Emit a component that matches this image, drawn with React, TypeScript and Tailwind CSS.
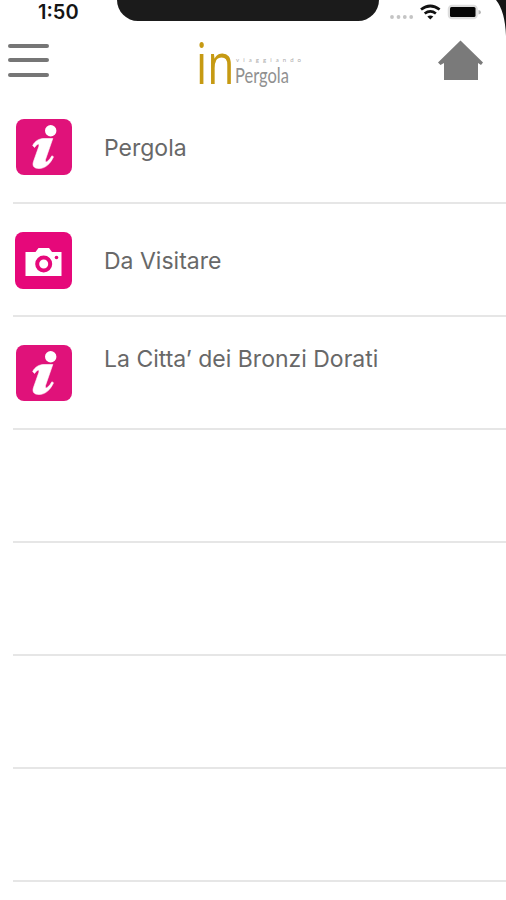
type Kind = "info" | "camera";

const rows: { label: string; icon: Kind; raised?: boolean }[] = [
  { label: "Pergola", icon: "info" },
  { label: "Da Visitare", icon: "camera" },
  { label: "La Citta’ dei Bronzi Dorati", icon: "info", raised: true },
];

function InfoIcon() {
  return (
    <svg viewBox="0 0 56 56" className="h-14 w-14 shrink-0">
      <rect width="56" height="56" rx="8" fill="#e0127a" />
      <circle cx="34.7" cy="11.7" r="5.700" fill="#fff" />
      <path
        d="M16.700 26.500C19 21.800 23.500 19.500 28 19.500H36.800L29.500 40.500C29 43 30 43.500 31.500 42.300C33.300 40.800 34.800 39 35.900 36.800L37.500 37.800C34.500 44.500 29.500 49.500 23 49.500C17.500 49.500 16.200 46.500 17.500 42.500L22.800 27.500C23.500 25 22.500 24.500 21 25.700C20 26.500 19.300 27.300 18.500 28.500Z"
        fill="#fff"
        stroke="#fff"
        strokeWidth=".6"
        strokeLinejoin="round"
      />
    </svg>
  );
}

function CameraIcon() {
  return (
    <svg viewBox="0 0 57 57" className="-ml-px mt-px h-[57px] w-[57px] shrink-0">
      <rect width="57" height="57" rx="8" fill="#e6087a" />
      <path d="M10.500 20H20.500L23.500 16H34L37 20H46.500V44H10.500Z" fill="#fff" />
      <circle cx="28.700" cy="32" r="6.500" fill="none" stroke="#e6087a" strokeWidth="4" />
      <circle cx="41.500" cy="25.500" r="1.800" fill="#e6087a" />
    </svg>
  );
}

function StatusBar() {
  return (
    <div className="relative flex h-[26px] items-start justify-between">
      <span className="ml-[38px] w-[50px] whitespace-nowrap pt-[2px] text-[20px] font-semibold leading-[21px] text-[#151515]">
        1:50
      </span>
      <div className="absolute left-[117px] top-0 h-[21px] w-[262px] rounded-b-[22px] bg-[#1b1b1b]" />
      <svg viewBox="0 0 120 40" className="h-10 w-[120px] shrink-0">
        <g fill="#c4c4c4">
          <circle cx="6" cy="17" r="1.900" />
          <circle cx="12.500" cy="17" r="1.900" />
          <circle cx="18.800" cy="17" r="1.900" />
          <circle cx="25.200" cy="17" r="1.900" />
        </g>
        <g fill="none" stroke="#111" strokeWidth="2.800">
          <path d="M35 9.500Q44.300 2.500 53.600 9.500" />
          <path d="M38.700 13.500Q44.300 9.300 49.900 13.500" />
        </g>
        <path d="M41.300 16.500Q44.300 14.300 47.300 16.500L44.300 19.500Z" fill="#111" />
        <rect x="62.500" y="5.500" width="28.500" height="13" rx="3.500" fill="#ddd" stroke="#dedede" strokeWidth="1.500" />
        <rect x="64" y="7" width="25.500" height="10" rx="1.500" fill="#050505" />
        <path d="M92.500 10V14.500Q95 14 95 12.200Q95 10.500 92.500 10Z" fill="#b8b8b8" />
        <path d="M110 0H120V36Q119 11 110 0Z" fill="#151515" />
      </svg>
    </div>
  );
}

function Header() {
  return (
    <header className="flex h-[65px] items-start justify-between pl-2 pr-[23px]">
      <button aria-label="Menu" className="mt-[18px] flex w-[41px] flex-col gap-[10px]">
        <span className="h-[4px] rounded-sm bg-[#767676]" />
        <span className="h-[4px] rounded-sm bg-[#767676]" />
        <span className="mt-px h-[4px] rounded-sm bg-[#767676]" />
      </button>
      <svg viewBox="0 0 110 65" className="ml-[18px] h-[65px] w-[110px] overflow-visible">
        <text x="0" y="0" transform="translate(-2 58) scale(.8 1)" fontFamily="Open Sans, sans-serif" fontSize="56" fill="#c69a13" textLength="48" lengthAdjust="spacingAndGlyphs">in</text>
        <text x="38" y="36" fontFamily="Lato, sans-serif" fontSize="6" fill="#aaa" textLength="65">viaggiando</text>
        <text x="0" y="0" transform="translate(37 57) scale(.76 1)" fontFamily="Lato, sans-serif" fontSize="21" fill="#909090" textLength="71" lengthAdjust="spacingAndGlyphs">Pergola</text>
      </svg>
      <svg viewBox="0 0 45 40" className="mt-[14px] h-10 w-[45px]">
        <path d="M22.500 .5L45 22.500L43 25L40 23V40H6V23L2.500 25L0 22.500Z" fill="#7a7a7a" />
      </svg>
    </header>
  );
}

export default function App() {
  return (
    <main className="h-[900px] w-[506px] overflow-hidden bg-white font-['Inter','Liberation_Sans',sans-serif]">
      <StatusBar />
      <Header />
      <ul className="pl-[13px]">
        {Array.from({ length: 7 }, (_, i) => {
          const row = rows[i];
          return (
            <li key={i} className="flex h-[113px] items-center border-b-2 border-[#e6e6e6] pl-[3px]">
              {row && (
                <>
                  {row.icon === "info" ? <InfoIcon /> : <CameraIcon />}
                  <span className={row.raised ? "mb-[27px] ml-8 text-[23px] text-[#686868]" : "ml-8 mt-[3px] text-[23px] text-[#686868]"}>
                    {row.label}
                  </span>
                </>
              )}
            </li>
          );
        })}
      </ul>
    </main>
  );
}
